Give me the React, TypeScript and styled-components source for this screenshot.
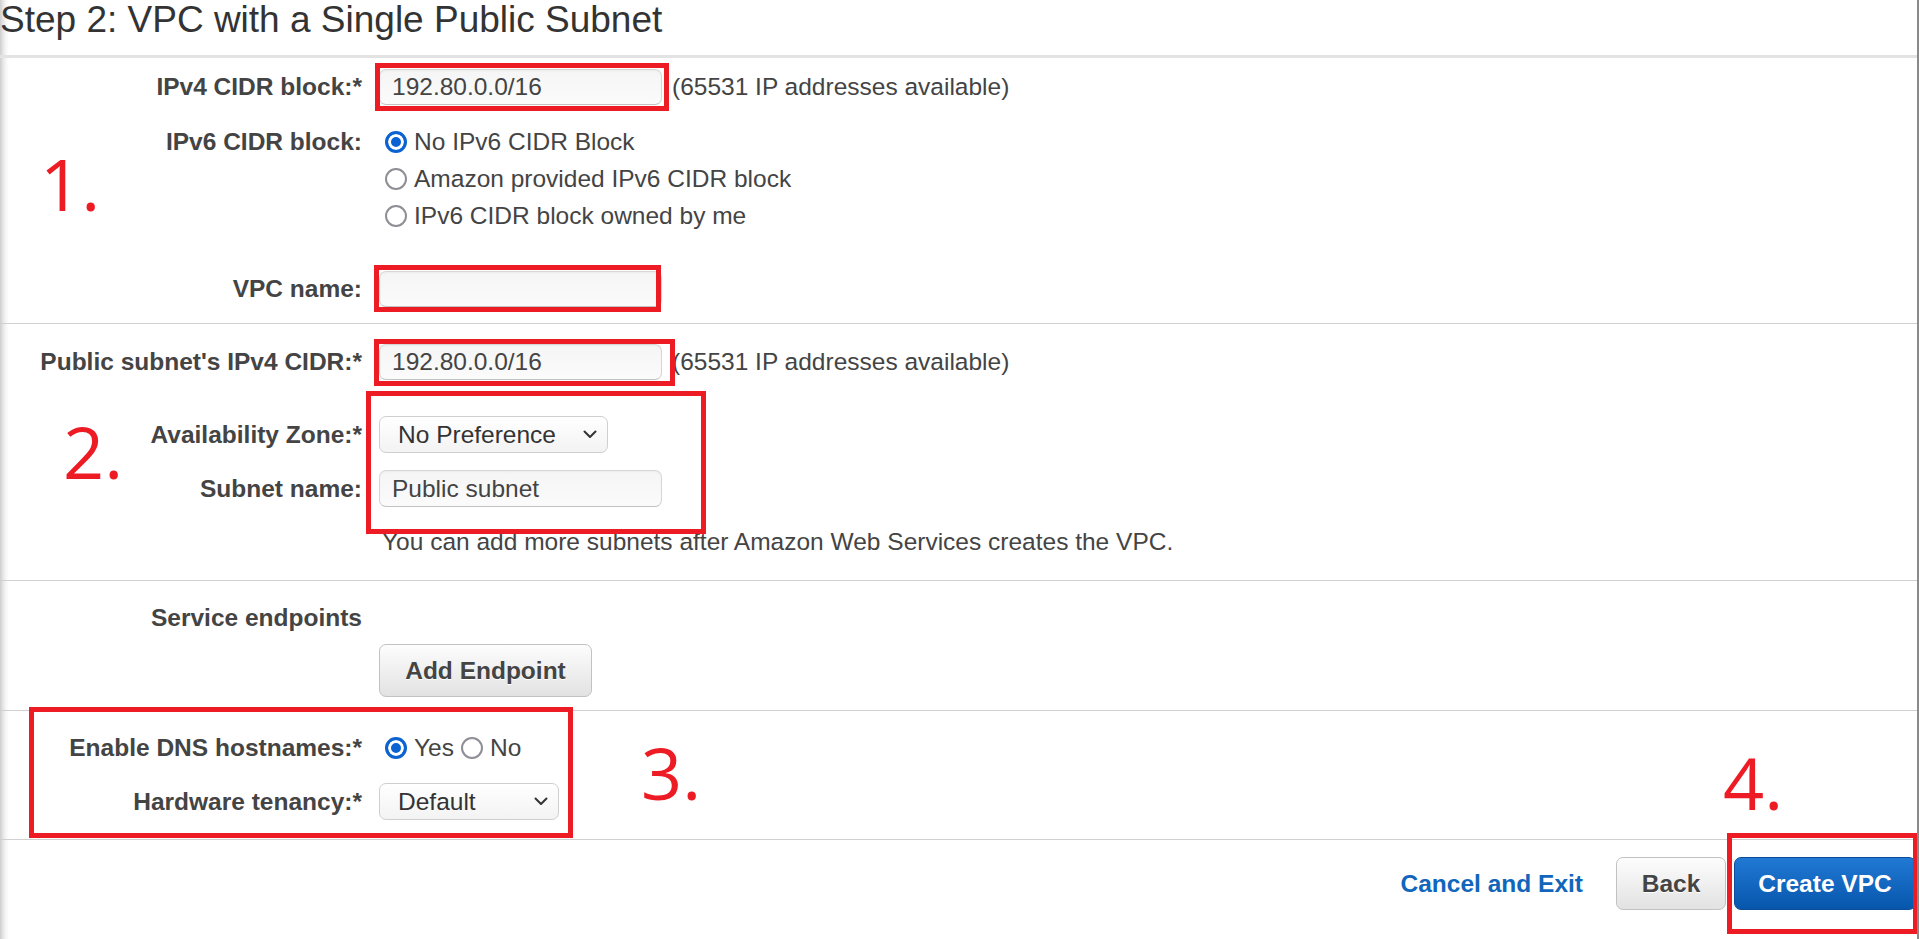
import React from "react";
import styled, { createGlobalStyle } from "styled-components";

const GlobalStyle = createGlobalStyle`
  html, body { margin: 0; padding: 0; overflow: hidden; background: #fff; }
  body { font-family: "Liberation Sans", Arial, sans-serif; }
  * { box-sizing: border-box; }
`;

const Page = styled.div`
  position: relative;
  width: 1919px;
  height: 939px;
  border-right: 2px solid #8a8a8a;
  background: linear-gradient(90deg, #cdcdcd 0px, #e6e6e6 3px, #f6f6f6 6px, #fff 9px);
  color: #444;
  font-size: 24.5px;
  overflow: hidden;
`;

const Title = styled.h1`
  margin: 0;
  height: 55px;
  padding-left: 0;
  font-size: 37px;
  font-weight: 400;
  line-height: 40px;
  color: #333;
  white-space: nowrap;
`;

const Section = styled.section<{ $thick?: boolean; $pt: number; $pb: number }>`
  border-top: ${(p) => (p.$thick ? "3px solid #e3e3e3" : "1px solid #d0d0d0")};
  padding: ${(p) => p.$pt}px 0 ${(p) => p.$pb}px;
`;

const Row = styled.div<{ $mt?: number; $align?: string }>`
  display: grid;
  grid-template-columns: 362px auto;
  column-gap: 17px;
  align-items: ${(p) => p.$align ?? "center"};
  margin-top: ${(p) => p.$mt ?? 0}px;
`;

const Label = styled.div`
  text-align: right;
  font-weight: 700;
  line-height: 37px;
  white-space: nowrap;
`;

const Control = styled.div`
  display: flex;
  align-items: center;
  white-space: nowrap;
`;

const TextInput = styled.input<{ $w?: number; $h?: number }>`
  width: ${(p) => p.$w ?? 283}px;
  height: ${(p) => p.$h ?? 36}px;
  padding: 0 12px;
  border: 1px solid #d6d6d6;
  border-bottom-color: #c3c3c3;
  border-radius: 7px;
  background: linear-gradient(#f5f5f5, #fbfbfb);
  box-shadow: inset 0 1px 2px rgba(0, 0, 0, 0.04);
  font-family: "Liberation Sans", Arial, sans-serif;
  font-size: 24.5px;
  color: #444;
  outline: none;
`;

const Hint = styled.span`
  margin-left: 10px;
  line-height: 37px;
`;

const Helper = styled.div`
  padding-left: 3px;
  line-height: 37px;
  white-space: nowrap;
`;

const RadioList = styled.div<{ $inline?: boolean }>`
  display: flex;
  flex-direction: ${(p) => (p.$inline ? "row" : "column")};
  gap: ${(p) => (p.$inline ? "7px" : "0")};
`;

const RadioOption = styled.label<{ $flush?: boolean }>`
  display: flex;
  align-items: center;
  gap: 7px;
  height: 37px;
  padding-left: ${(p) => (p.$flush ? 0 : 6)}px;
  white-space: nowrap;
`;

const RadioDot = styled.span<{ $checked?: boolean }>`
  display: inline-block;
  width: 22px;
  height: 22px;
  border-radius: 50%;
  flex: none;
  ${(p) =>
    p.$checked
      ? `border: 3px solid #0b63d1; background: #0b63d1; box-shadow: inset 0 0 0 3px #fff;`
      : `border: 2px solid #8e8e95; background: #fff;`}
`;

const Select = styled.div<{ $w: number }>`
  display: flex;
  align-items: center;
  justify-content: space-between;
  width: ${(p) => p.$w}px;
  height: 37px;
  padding: 0 10px 0 18px;
  border: 1px solid #cfcfcf;
  border-radius: 7px;
  background: linear-gradient(#ffffff, #f3f3f3);
  color: #333;
`;

const Button = styled.button<{ $w: number; $primary?: boolean }>`
  width: ${(p) => p.$w}px;
  height: 53px;
  padding: 0;
  border-radius: 7px;
  font-family: "Liberation Sans", Arial, sans-serif;
  font-size: 24.5px;
  font-weight: 700;
  cursor: pointer;
  ${(p) =>
    p.$primary
      ? `color: #fff;
         border: 1px solid #0a4e9b;
         background: linear-gradient(#2179d4, #0756ac);`
      : `color: #444;
         border: 1px solid #c2c2c2;
         background: linear-gradient(#fdfdfd, #e2e2e2);
         text-shadow: 0 1px 0 #fff;`}
`;

const Footer = styled.div`
  display: flex;
  justify-content: flex-end;
  align-items: center;
  border-top: 1px solid #d0d0d0;
  padding: 17px 1px 0 0;
`;

const CancelLink = styled.a`
  color: #1166bb;
  font-weight: 700;
  text-decoration: none;
  margin-right: 33px;
  cursor: pointer;
`;

const ButtonGap = styled.span`
  width: 8px;
`;

const Annot = styled.div<{ $x: number; $y: number; $w: number; $h: number }>`
  position: absolute;
  left: ${(p) => p.$x}px;
  top: ${(p) => p.$y}px;
  width: ${(p) => p.$w}px;
  height: ${(p) => p.$h}px;
  border: 5px solid #ed1c24;
  pointer-events: none;
`;

const Num = styled.div<{ $x: number; $y: number }>`
  position: absolute;
  left: ${(p) => p.$x}px;
  top: ${(p) => p.$y}px;
  font-family: "Open Sans", "Noto Sans", sans-serif;
  font-size: 72px;
  line-height: 72px;
  color: #ed1c24;
  pointer-events: none;
`;

const Chevron = () => (
  <svg width="14" height="9" viewBox="0 0 14 9" aria-hidden="true">
    <path d="M1.5 1.5 L7 7 L12.5 1.5" fill="none" stroke="#333" strokeWidth="2" strokeLinecap="round" strokeLinejoin="round" />
  </svg>
);

const boxes = [
  { x: 375, y: 63, w: 294, h: 48 },
  { x: 374, y: 265, w: 287, h: 47 },
  { x: 374, y: 339, w: 301, h: 47 },
  { x: 366, y: 391, w: 340, h: 143 },
  { x: 29, y: 707, w: 544, h: 131 },
  { x: 1727, y: 833, w: 191, h: 101 },
];

const nums = [
  { t: "1.", x: 40, y: 147 },
  { t: "2.", x: 63, y: 415 },
  { t: "3.", x: 641, y: 736 },
  { t: "4.", x: 1723, y: 746 },
];

export default function App() {
  return (
    <>
      <GlobalStyle />
      <Page>
        <Title>Step 2: VPC with a Single Public Subnet</Title>

        <Section $thick $pt={10} $pb={16}>
          <Row>
            <Label>IPv4 CIDR block:*</Label>
            <Control>
              <TextInput readOnly value="192.80.0.0/16" />
              <Hint>(65531 IP addresses available)</Hint>
            </Control>
          </Row>
          <Row $mt={18} $align="start">
            <Label>IPv6 CIDR block:</Label>
            <RadioList>
              <RadioOption>
                <RadioDot $checked />
                No IPv6 CIDR Block
              </RadioOption>
              <RadioOption>
                <RadioDot />
                Amazon provided IPv6 CIDR block
              </RadioOption>
              <RadioOption>
                <RadioDot />
                IPv6 CIDR block owned by me
              </RadioOption>
            </RadioList>
          </Row>
          <Row $mt={36}>
            <Label>VPC name:</Label>
            <Control>
              <TextInput readOnly value="" />
            </Control>
          </Row>
        </Section>

        <Section $pt={19} $pb={20}>
          <Row>
            <Label>Public subnet's IPv4 CIDR:*</Label>
            <Control>
              <TextInput readOnly value="192.80.0.0/16" />
              <Hint>(65531 IP addresses available)</Hint>
            </Control>
          </Row>
          <Row $mt={36}>
            <Label>Availability Zone:*</Label>
            <Control>
              <Select $w={229}>
                <span>No Preference</span>
                <Chevron />
              </Select>
            </Control>
          </Row>
          <Row $mt={17}>
            <Label>Subnet name:</Label>
            <Control>
              <TextInput readOnly value="Public subnet" $h={37} />
            </Control>
          </Row>
          <Row $mt={16}>
            <span />
            <Helper>You can add more subnets after Amazon Web Services creates the VPC.</Helper>
          </Row>
        </Section>

        <Section $pt={18} $pb={13}>
          <Row>
            <Label>Service endpoints</Label>
            <span />
          </Row>
          <Row $mt={8}>
            <span />
            <Control>
              <Button $w={213}>Add Endpoint</Button>
            </Control>
          </Row>
        </Section>

        <Section $pt={18} $pb={19}>
          <Row>
            <Label>Enable DNS hostnames:*</Label>
            <RadioList $inline>
              <RadioOption>
                <RadioDot $checked />
                Yes
              </RadioOption>
              <RadioOption $flush>
                <RadioDot />
                No
              </RadioOption>
            </RadioList>
          </Row>
          <Row $mt={17}>
            <Label>Hardware tenancy:*</Label>
            <Control>
              <Select $w={180}>
                <span>Default</span>
                <Chevron />
              </Select>
            </Control>
          </Row>
        </Section>

        <Footer>
          <CancelLink>Cancel and Exit</CancelLink>
          <Button $w={110}>Back</Button>
          <ButtonGap />
          <Button $w={182} $primary>
            Create VPC
          </Button>
        </Footer>

        {boxes.map((b, i) => (
          <Annot key={i} $x={b.x} $y={b.y} $w={b.w} $h={b.h} />
        ))}
        {nums.map((n) => (
          <Num key={n.t} $x={n.x} $y={n.y}>
            {n.t}
          </Num>
        ))}
      </Page>
    </>
  );
}
